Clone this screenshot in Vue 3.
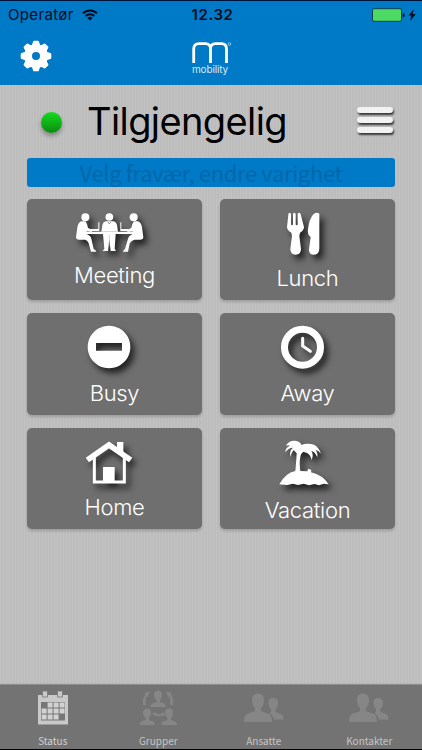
<script setup>
import { ref } from 'vue';

const operator = ref('Operatør');
const time = ref('12.32');
const currentStatus = ref('Tilgjengelig');
const activeTab = ref('Status');

// iconHeight sets how far below the card's top edge the label starts
const activities = [
  { id: 'meeting', label: 'Meeting', iconHeight: 63, viewX: 21 },
  { id: 'lunch', label: 'Lunch', iconHeight: 66, viewX: 27 },
  { id: 'busy', label: 'Busy', iconHeight: 67, viewX: 21 },
  { id: 'away', label: 'Away', iconHeight: 67, viewX: 27 },
  { id: 'home', label: 'Home', iconHeight: 66, viewX: 21 },
  { id: 'vacation', label: 'Vacation', iconHeight: 69, viewX: 27 },
];

const tabs = ['Status', 'Grupper', 'Ansatte', 'Kontakter'];

function selectActivity(activity) {
  currentStatus.value = activity.label;
}
</script>

<template>
  <div class="phone">
    <header class="header">
      <div class="status-bar">
        <div class="carrier">
          <span>{{ operator }}</span>
          <svg class="wifi" width="16" height="12" viewBox="0 0 16 12">
            <path d="M1 4.3a10 10 0 0 1 14 0M3.6 7a6.3 6.3 0 0 1 8.800 0" fill="none" stroke="#000d1c" stroke-width="1.9" />
            <path d="M5.4 8.9a3.8 3.8 0 0 1 5.2 0L8 11.6z" fill="#000d1c" />
          </svg>
        </div>
        <span class="time">{{ time }}</span>
        <svg class="battery" width="46" height="14" viewBox="0 0 46 14">
          <rect x="1.500" y=".7" width="29" height="12.6" rx="1.5" fill="#4cd964" stroke="#123f4e" />
          <path d="M31.7 5q2 .3 2 2.200t-2 2.200z" fill="#001325" />
          <path d="M43 1 37.500 7.6h3L39 13l5.800-6.900h-3.300z" fill="#000d1c" />
        </svg>
      </div>
      <div class="nav-bar">
        <svg class="gear" width="32" height="32" viewBox="-16 -16 32 32">
          <g fill="#fff">
            <circle r="12" />
            <path
              v-for="n in 8"
              :key="n"
              d="M-4.2-10.5-2.9-14.4Q-2.7-15.3-1.8-15.3H1.8Q2.7-15.3 2.9-14.4L4.2-10.5z"
              :transform="`rotate(${n * 45})`"
            />
          </g>
          <circle r="4" fill="#007ac6" />
        </svg>
        <div class="logo">
          <svg width="40" height="22" viewBox="0 0 40 22">
            <path d="M1.7 21V7Q1.7 1.7 7 1.7H13.5Q18.5 1.7 18.5 7V21M18.5 7Q18.5 1.7 23.5 1.7H29.5Q34.500 1.7 34.500 7V21" fill="none" stroke="#fff" stroke-width="2.8" />
            <circle cx="37.5" cy="2" r="1.3" fill="none" stroke="#9ccbea" stroke-width=".9" />
          </svg>
          <span class="logo-name">mobility</span>
        </div>
      </div>
    </header>

    <main class="content">
      <div class="current-status">
        <span class="dot"></span>
        <h1>{{ currentStatus }}</h1>
        <div class="menu"><i></i><i></i><i></i></div>
      </div>

      <div class="hint">Velg fravær, endre varighet</div>

      <div class="activities">
        <div v-for="activity in activities" :key="activity.id" class="card" @click="selectActivity(activity)">
          <svg
            class="card-icon"
            width="175"
            :height="activity.iconHeight"
            :viewBox="`${activity.viewX} 25 525 ${activity.iconHeight * 3}`"
          >
            <g v-if="activity.id === 'meeting'" fill="#fff">
              <circle cx="196" cy="80" r="12" />
              <circle cx="268" cy="79" r="11.5" />
              <circle cx="341" cy="80" r="12" />
              <path d="M184 92Q175 95 172 110L168 140Q168 147 178 147H196Q203 149 206 158L213 183H229Q228 178 221 175L214 144Q212 135 200 130V122L216 124V117L204 112Q201 97 196 92z" />
              <path d="M354 92Q363 95 366 110L370 140Q370 147 360 147H343Q335 149 329 158L324 183H309Q310 178 315 175L324 144Q326 135 338 130V122L322 124V117L334 112Q337 97 342 92z" />
              <path d="M257 92H279Q288 93 291 103L294 123H244L247 103Q249 94 257 92z" />
              <path d="M196 123H341V130H196z" />
              <path d="M249 130H287L284 174 288 181H272L268 147 264 181H248L253 174z" />
              <path d="M212 115H235V95H238V121H212zM301 95H304V115H324V121H301z" />
              <path d="m264 94 4 6 5-6" fill="none" stroke="#777" stroke-width="2" />
              <path d="M268 133V168" stroke="#aaa" stroke-width="1.5" />
            </g>
            <g v-else-if="activity.id === 'lunch'" fill="#fff">
              <path d="M232 72Q232 66 236 66T240 72V101Q240 104 243 104T246 101V71Q246 66 250 66T254 71V101Q254 104 257 104T260 101V71Q260 66 264 66T269 71L279 109Q279 119 267 126L265 136 270 175Q270 192 254 192T238 175L243 136 241 126Q228 119 228 109z" />
              <path d="M325 69V173Q325 192 309 192T294 176L299 139Q289 133 291 115 295 85 306 72 315 62 325 69z" />
            </g>
            <path
              v-else-if="activity.id === 'busy'"
              d="M267 63a64 64 0 1 0 .1 0zM228 115H306V138H228z"
              fill="#fff"
              fill-rule="evenodd"
            />
            <g v-else-if="activity.id === 'away'" fill="none" stroke="#fff" stroke-linecap="round">
              <circle cx="274.5" cy="127.5" r="54" stroke-width="21" />
              <path d="M275 101V124L298 140" stroke-width="9" />
            </g>
            <g v-else-if="activity.id === 'home'" fill="none" stroke="#fff">
              <path d="m202 121 65-45 65 45" stroke-width="17" />
              <path d="M223 109V187H313V109" stroke-width="9" />
              <path d="M249 142H284V187H249zM291 67H310V102L291 87z" fill="#fff" stroke="none" />
            </g>
            <g v-else fill="#fff">
              <path d="M205 194Q223 160 253 154 256 122 257 101L248 91Q241 98 238 112 234 94 246 84 231 84 223 98 222 85 237 78 229 74 224 80 231 62 253 63 266 64 272 76 283 70 300 73 319 74 330 102 320 91 314 92 321 100 319 113 310 94 301 94 309 105 302 121 298 105 288 100L277 96 270 104Q263 125 268 154L289 155 292 147 301 151 300 158Q335 166 353 194L338 192 324 197 310 193 294 197 278 192 261 196 246 192 228 196z" />
            </g>
          </svg>
          <span class="card-label">{{ activity.label }}</span>
        </div>
      </div>
    </main>

    <nav class="tab-bar">
      <div
        v-for="tab in tabs"
        :key="tab"
        class="tab"
        :class="{ active: tab === activeTab }"
        @click="activeTab = tab"
      >
        <svg v-if="tab === 'Status'" width="32" height="36" viewBox="0 0 32 36">
          <path d="M1 5H31V34.500H1z" fill="#c9c9c9" />
          <path d="M4 12H28V30.500H4z" fill="#777" />
          <path d="M5.500 1h5v6h-5zM20.500 1h5v6h-5z" fill="#c9c9c9" stroke="#777" stroke-width=".8" />
          <path d="M10.6 12.500h5v5h-5zm6 0h5v5h-5zm6 0h5v5h-5zM4.600 18.500h5v5h-5zm6 0h5v5h-5zm6 0h5v5h-5zm6 0h5v5h-5zM4.600 24.500h5v5h-5zm6 0h5v5h-5zm6 0h5v5h-5z" fill="#d2d2d2" />
        </svg>
        <svg v-else-if="tab === 'Grupper'" width="38" height="36" viewBox="0 0 38 36" fill="#868686">
          <path id="person" d="M19 .5Q23 .5 23 5 23 8 21 10V12L25 13.5Q27 14.5 27 17H11.500Q11.500 14.500 13 13.500L17.500 12V10Q15 8 15 5 15 .5 19 .5z" />
          <use href="#person" transform="translate(-11 18)" />
          <use href="#person" transform="translate(11 18)" />
          <path d="M11 1.5 8 8 7.500 6Q6 9 7 15H4Q3 9 6.500 4L5 3zM27 1.500 33 3 31.500 4Q35 9 34 15H31Q32 9 30 6L29.500 8zM13 24l4-2v1.500q3 1.500 7-1v-1l2 4-4 1v-1q-4 1.500-7-.5z" />
        </svg>
        <svg v-else width="40" height="30" viewBox="0 0 40 30" fill="#868686">
          <path d="M14 .5Q20 .5 20 7 20 12 17 15V18L25 21Q28 22.500 28 29H0Q0 22.500 3 21L11 18V15Q8 12 8 7 8 .5 14 .5z" />
          <path d="M29 5Q34 5 34 10 34 14 31.500 16V19L37 21Q39.500 22 39.500 26.500H30Q29 22 25.500 20L27 19V16Q24.500 14 24.500 10 24.500 5 29 5z" />
        </svg>
        <span class="tab-label">{{ tab }}</span>
      </div>
    </nav>
  </div>
</template>

<style>
body {
  margin: 0;
}
</style>

<style scoped>
.phone {
  box-sizing: border-box;
  width: 422px;
  height: 750px;
  display: flex;
  flex-direction: column;
  overflow: hidden;
  border-bottom: 1px solid #000;
  font-family: Inter, "Liberation Sans", sans-serif;
  background:
    repeating-linear-gradient(90deg, rgba(255, 255, 255, 0.05) 0 1px, rgba(0, 0, 0, 0.01) 1px 3px),
    #bfbfbf;
}

.header {
  box-sizing: border-box;
  height: 85px;
  background: #007ac6;
  border-top: 1px solid #00143c;
}

.status-bar {
  height: 27px;
  padding: 0 5px 0 8px;
  display: grid;
  grid-template-columns: 1fr auto 1fr;
  align-items: center;
  font-size: 15px;
  color: #000d1c;
}

.carrier {
  display: flex;
  align-items: center;
  gap: 8px;
  letter-spacing: 0.35px;
}

.time {
  font-weight: 600;
  letter-spacing: 0.6px;
}

.battery {
  justify-self: end;
}

.nav-bar {
  display: grid;
  grid-template-columns: 1fr auto 1fr;
  align-items: start;
  padding: 12px 18px 0 20px;
}

.logo {
  width: 40px;
  margin-top: 2px;
  display: flex;
  flex-direction: column;
}

.logo-name {
  font-size: 10px;
  line-height: 10px;
  letter-spacing: -0.15px;
  color: #d8ebf8;
}

.logo svg,
.gear {
  display: block;
}

.content {
  flex: 1;
  padding: 0 27px;
}

.current-status {
  height: 73px;
  display: flex;
  align-items: center;
}

.dot {
  width: 21px;
  height: 21px;
  margin-left: 14px;
  margin-top: 1px;
  border-radius: 50%;
  background: linear-gradient(#14dc1e, #0a8a10);
  box-shadow: 0 3px 4px rgba(0, 0, 0, 0.3);
}

.current-status h1 {
  flex: 1;
  margin: 0 0 2px 25px;
  font-size: 38px;
  font-weight: 400;
  letter-spacing: -0.6px;
  color: #000;
}

.menu {
  width: 36px;
  margin-right: 2px;
  margin-bottom: 4px;
  display: flex;
  flex-direction: column;
  gap: 4px;
}

.menu i {
  height: 6px;
  border-radius: 3px;
  background: #f2f2f2;
  box-shadow: 1px 2px 2px rgba(0, 0, 0, 0.7);
}

.hint {
  height: 29px;
  border-radius: 3px;
  background: #007ac6;
  color: #0067aa;
  font-family: "Noto Sans CJK SC", sans-serif;
  font-size: 22px;
  letter-spacing: -0.36px;
  line-height: 28px;
  text-align: center;
}

.activities {
  margin-top: 11.5px;
  display: grid;
  grid-template-columns: 175px 175px;
  grid-auto-rows: 101.5px;
  gap: 13px 18px;
}

.card {
  display: flex;
  flex-direction: column;
  align-items: center;
  border-radius: 5px;
  background: #6f6f6f;
  box-shadow: 0 2px 3px rgba(0, 0, 0, 0.18);
  cursor: pointer;
}

.card-icon {
  flex: none;
  filter: drop-shadow(4px 5px 3px rgba(0, 0, 0, 0.7));
}

.card-label {
  font-size: 22px;
  font-weight: 300;
  line-height: 26px;
  letter-spacing: -0.3px;
  color: #fff;
}

.tab-bar {
  height: 64.5px;
  display: grid;
  grid-template-columns: repeat(4, 1fr);
  background: #737373;
  box-shadow: 0 -1px 1px rgba(0, 0, 0, 0.25);
}

.tab {
  display: flex;
  flex-direction: column;
  align-items: center;
  justify-content: space-between;
}

.tab svg {
  margin: auto 0;
}

.tab-label {
  font-family: "Noto Sans CJK SC", sans-serif;
  font-size: 10px;
  line-height: 17px;
  color: #c4c4c4;
}

.tab.active .tab-label {
  color: #d0d0d0;
}
</style>
